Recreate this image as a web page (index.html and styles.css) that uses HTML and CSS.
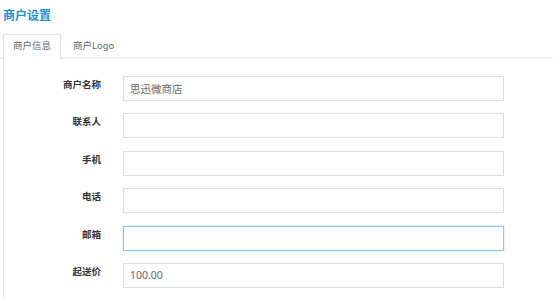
FILE: index.html
```html
<!DOCTYPE html>
<html lang="zh">
<head>
    <meta charset="UTF-8">
    <title>商户设置</title>
    <link rel="stylesheet" href="styles.css">
</head>
<body>
    <h1 class="page-title">商户设置</h1>
    <div class="tabs">
        <a class="tab active" href="#">商户信息</a>
        <a class="tab" href="#">商户Logo</a>
    </div>
    <div class="panel">
        <div class="form-row">
            <label>商户名称</label>
            <input type="text" value="思迅微商店">
        </div>
        <div class="form-row">
            <label>联系人</label>
            <input type="text">
        </div>
        <div class="form-row">
            <label>手机</label>
            <input type="text">
        </div>
        <div class="form-row">
            <label>电话</label>
            <input type="text">
        </div>
        <div class="form-row">
            <label>邮箱</label>
            <input type="text" class="focused">
        </div>
        <div class="form-row">
            <label>起送价</label>
            <input type="text" value="100.00">
        </div>
    </div>
</body>
</html>
```

FILE: styles.css
```css
body, html {
    margin: 0;
    padding: 0;
    background: #fff;
    font-family: "Noto Sans", "Noto Sans CJK SC", sans-serif;
}

.page-title {
    margin: 0;
    padding: 6px 0 0 3px;
    height: 34px;
    box-sizing: border-box;
    font-size: 12px;
    font-weight: bold;
    color: #1a8fd8;
}

.tabs {
    display: flex;
    padding-left: 3px;
    border-bottom: 2px solid #eeeeee;
}

.tab {
    display: block;
    height: 22px;
    line-height: 22px;
    padding: 0 9px 0 9px;
    margin-bottom: -2px;
    font-size: 9.5px;
    color: #666;
    text-decoration: none;
    border: 1px solid transparent;
    border-bottom: none;
}

.tab + .tab {
    margin-left: 2px;
}

.tab.active {
    border-color: #e4e4e4;
    background: #fff;
    height: 24px;
}

.panel {
    margin-left: 3px;
    border-left: 1px solid #e4e4e4;
    padding-top: 17px;
    height: 222px;
}

.form-row {
    display: flex;
    align-items: flex-start;
    margin-bottom: 12.4px;
}

.form-row label {
    width: 97px;
    text-align: right;
    font-size: 9.5px;
    font-weight: bold;
    color: #333;
    padding-top: 1px;
    margin-right: 22px;
}

.form-row input {
    width: 381px;
    height: 25px;
    box-sizing: border-box;
    border: 1px solid #dcdcdc;
    padding: 0 6px;
    font-family: inherit;
    font-size: 10.5px;
    color: #666;
    outline: none;
}

.form-row input.focused {
    border-color: #7ec8f5;
    box-shadow: 0 0 2px rgba(126, 200, 245, 0.5);
}
```
